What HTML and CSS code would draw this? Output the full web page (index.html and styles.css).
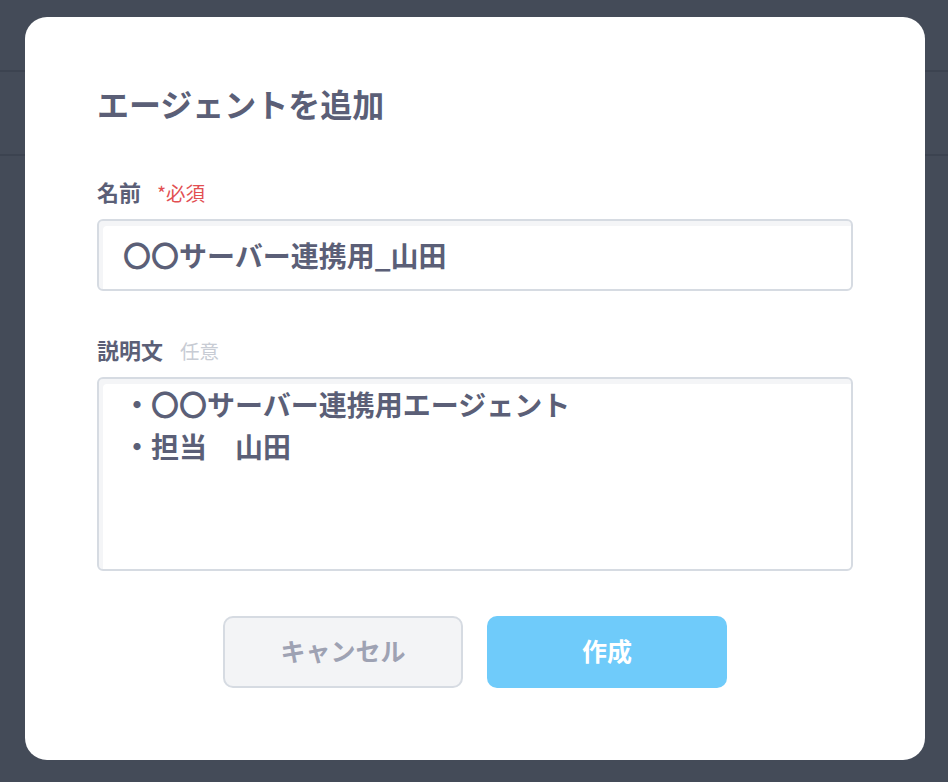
FILE: index.html
```html
<!DOCTYPE html>
<html lang="ja">
<head>
<meta charset="utf-8">
<title>エージェントを追加</title>
<link rel="stylesheet" href="styles.css">
</head>
<body>
<div class="page">
  <div class="topbar"></div>
  <div class="subbar"></div>
  <div class="content"></div>
</div>
<div class="modal">
  <h1 class="title">エージェントを追加</h1>
  <div class="field first">
    <div class="label">名前<span class="req">*必須</span></div>
    <div class="input">〇〇サーバー連携用_山田</div>
  </div>
  <div class="field">
    <div class="label">説明文<span class="opt">任意</span></div>
    <div class="textarea">・〇〇サーバー連携用エージェント<br>・担当　山田</div>
  </div>
  <div class="actions">
    <button class="btn cancel">キャンセル</button>
    <button class="btn create">作成</button>
  </div>
</div>
</body>
</html>
```
FILE: styles.css
```css
html, body {
  margin: 0;
  padding: 0;
}
body {
  width: 948px;
  height: 782px;
  overflow: hidden;
  background: #444b58;
  font-family: "Noto Sans CJK JP", "Noto Sans", sans-serif;
  position: relative;
}
.page {
  display: flex;
  flex-direction: column;
}
.topbar {
  height: 70px;
  border-bottom: 2px solid #3c4350;
}
.subbar {
  height: 82px;
  border-bottom: 2px solid #3c4350;
}
.modal {
  position: absolute;
  left: 25px;
  top: 17px;
  width: 900px;
  height: 743px;
  box-sizing: border-box;
  background: #ffffff;
  border-radius: 22px;
  padding: 70px 72px 72px;
  display: flex;
  flex-direction: column;
  color: #5b5f77;
}
.title {
  margin: 0;
  font-size: 32px;
  line-height: 32px;
  font-weight: 700;
  color: #5b5f77;
}
.field {
  display: flex;
  flex-direction: column;
  gap: 13px;
  margin-top: 45px;
}
.field.first {
  margin-top: 59px;
}
.label {
  font-size: 22px;
  line-height: 26px;
  font-weight: 700;
  display: flex;
  align-items: baseline;
}
.req {
  margin-left: 16px;
  font-size: 19.5px;
  font-weight: 400;
  color: #e24f52;
}
.opt {
  margin-left: 17px;
  font-size: 19.5px;
  font-weight: 400;
  color: #c8ccd4;
}
.input, .textarea {
  box-sizing: border-box;
  width: 756px;
  border: 2px solid #d6dbe2;
  border-radius: 6px;
  background: #ffffff;
  box-shadow: inset 4px 5px 0 0 #f4f5f7;
  font-size: 28px;
  font-weight: 700;
  color: #5b5f77;
}
.input {
  height: 72px;
  padding: 0 24px;
  display: flex;
  align-items: center;
}
.textarea {
  height: 194px;
  padding: 4px 24px;
  line-height: 42px;
}
.actions {
  margin-top: 45px;
  display: flex;
  justify-content: center;
  gap: 24px;
}
.btn {
  width: 240px;
  height: 72px;
  box-sizing: border-box;
  border-radius: 10px;
  padding: 0 0 5px;
  font-family: "Noto Sans CJK JP", "Noto Sans", sans-serif;
  font-size: 25px;
  font-weight: 700;
  cursor: pointer;
}
.cancel {
  background: #f3f4f6;
  border: 2px solid #d6dbe2;
  color: #9ea2b3;
}
.create {
  background: #6fcbfa;
  border: none;
  color: #ffffff;
}
```
